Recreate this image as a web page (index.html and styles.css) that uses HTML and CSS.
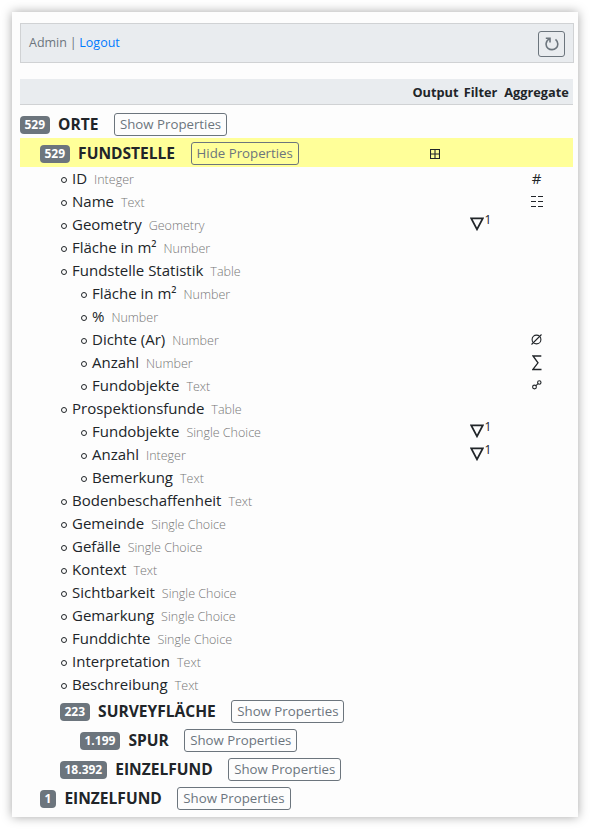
FILE: index.html
```html
<!DOCTYPE html>
<html lang="de">
<head>
<meta charset="utf-8">
<title>Properties</title>
<link rel="stylesheet" href="styles.css">
</head>
<body>
<svg class="defs" aria-hidden="true">
  <symbol id="filter" viewBox="0 0 14 14"><path d="M1.200 1.400H12.800L7 12.300Z" fill="none" stroke="currentColor" stroke-width="1.800"/></symbol>
</svg>
<main class="panel">
  <header class="toolbar">
    <div class="user">Admin | <a href="#">Logout</a></div>
    <button class="reload" aria-label="Reload"><svg width="14" height="14" viewBox="0 0 14 14"><path d="M.8 1.300H5V5.500M4.800 1.600C.2 4 .2 9 3 11.300C5.200 13.100 8.900 13.100 11 11.200C13.500 8.900 13.400 4.800 10.500 2.300" fill="none" stroke="currentColor" stroke-width="1.600"/></svg></button>
  </header>
  <div class="row head"><span></span><span class="cell">Output</span><span class="cell">Filter</span><span class="cell">Aggregate</span></div>
  <section class="tree">
    <div class="row group"><div class="label"><span class="badge">529</span><b>ORTE</b><button>Show Properties</button></div></div>
    <div class="row group active"><div class="label l1"><span class="badge">529</span><b>FUNDSTELLE</b><button>Hide Properties</button></div><span class="cell out"><svg width="10" height="10" viewBox="0 0 10 10"><path d="M.5 .5H9.500V9.500H.5ZM5 .5V9.500M.5 5H9.500" fill="none" stroke="currentColor" stroke-width="1.100"/></svg></span></div>
    <div class="row prop"><div class="label l2">ID<small>Integer</small></div><span class="cell agg">#</span></div>
    <div class="row prop"><div class="label l2">Name<small>Text</small></div><span class="cell agg"><svg width="12" height="12" viewBox="0 0 12 12"><path d="M0 1.500H5M7 1.500H12M0 6.500H5M7 6.500H12M0 11.500H5M7 11.500H12" stroke="currentColor"/></svg></span></div>
    <div class="row prop"><div class="label l2">Geometry<small>Geometry</small></div><span class="cell filter"><svg width="14" height="14"><use href="#filter"/></svg><sup>1</sup></span></div>
    <div class="row prop"><div class="label l2">Fläche in m²<small>Number</small></div></div>
    <div class="row prop"><div class="label l2">Fundstelle Statistik<small>Table</small></div></div>
    <div class="row prop"><div class="label l3">Fläche in m²<small>Number</small></div></div>
    <div class="row prop"><div class="label l3">%<small>Number</small></div></div>
    <div class="row prop"><div class="label l3">Dichte (Ar)<small>Number</small></div><span class="cell agg"><svg width="11" height="11" viewBox="0 0 11 11"><circle cx="5.500" cy="5.500" r="4.400" fill="none" stroke="currentColor" stroke-width="1.100"/><path d="M.5 10.500L10.500 .5" stroke="currentColor" stroke-width="1.100"/></svg></span></div>
    <div class="row prop"><div class="label l3">Anzahl<small>Number</small></div><span class="cell agg sum"><svg width="10" height="16" viewBox="0 0 10 16"><path d="M9.300 1H1L6 7.800L.8 14.500H9.500" fill="none" stroke="currentColor" stroke-width="1.300"/></svg></span></div>
    <div class="row prop"><div class="label l3">Fundobjekte<small>Text</small></div><span class="cell agg"><svg width="10" height="10" viewBox="0 0 10 10"><g fill="none" stroke="currentColor" stroke-width="1.100"><circle cx="2.500" cy="7" r="1.900"/><circle cx="7.300" cy="2.500" r="1.700"/><path d="M4 5.700L6 3.700"/></g></svg></span></div>
    <div class="row prop"><div class="label l2">Prospektionsfunde<small>Table</small></div></div>
    <div class="row prop"><div class="label l3">Fundobjekte<small>Single Choice</small></div><span class="cell filter"><svg width="14" height="14"><use href="#filter"/></svg><sup>1</sup></span></div>
    <div class="row prop"><div class="label l3">Anzahl<small>Integer</small></div><span class="cell filter"><svg width="14" height="14"><use href="#filter"/></svg><sup>1</sup></span></div>
    <div class="row prop"><div class="label l3">Bemerkung<small>Text</small></div></div>
    <div class="row prop"><div class="label l2">Bodenbeschaffenheit<small>Text</small></div></div>
    <div class="row prop"><div class="label l2">Gemeinde<small>Single Choice</small></div></div>
    <div class="row prop"><div class="label l2">Gefälle<small>Single Choice</small></div></div>
    <div class="row prop"><div class="label l2">Kontext<small>Text</small></div></div>
    <div class="row prop"><div class="label l2">Sichtbarkeit<small>Single Choice</small></div></div>
    <div class="row prop"><div class="label l2">Gemarkung<small>Single Choice</small></div></div>
    <div class="row prop"><div class="label l2">Funddichte<small>Single Choice</small></div></div>
    <div class="row prop"><div class="label l2">Interpretation<small>Text</small></div></div>
    <div class="row prop"><div class="label l2">Beschreibung<small>Text</small></div></div>
    <div class="row group"><div class="label l2"><span class="badge">223</span><b>SURVEYFLÄCHE</b><button>Show Properties</button></div></div>
    <div class="row group"><div class="label l3"><span class="badge">1.199</span><b>SPUR</b><button>Show Properties</button></div></div>
    <div class="row group"><div class="label l2"><span class="badge">18.392</span><b>EINZELFUND</b><button>Show Properties</button></div></div>
    <div class="row group"><div class="label l1"><span class="badge">1</span><b>EINZELFUND</b><button>Show Properties</button></div></div>
  </section>
</main>
</body>
</html>
```
FILE: styles.css
```css
* { box-sizing: border-box; }
body {
  margin: 0;
  padding: 12px;
  background: #fff;
  color: #212529;
  font: 15px/23px "Open Sans", "Noto Sans", sans-serif;
}
.defs { display: none; }
.panel {
  width: 566px;
  height: 805px;
  padding: 11px 4px 0 8px;
  background: #fdfdfd;
  box-shadow: 0 0 10px rgba(0, 0, 0, .35);
}
.toolbar {
  display: flex;
  justify-content: space-between;
  height: 40px;
  padding: 7px 8px;
  background: #e9ecef;
  border: 1px solid #d0d2d4;
  color: #6c757d;
  font-size: 12.5px;
}
.user { line-height: 23px; word-spacing: -.5px; }
.user a { color: #007bff; text-decoration: none; }
button {
  padding: 0 5px;
  background: transparent;
  border: 1px solid #6c757d;
  border-radius: 3px;
  color: #6c757d;
  font: 13.25px/21px "Open Sans", "Noto Sans", sans-serif;
  white-space: nowrap;
}
.reload {
  display: flex;
  align-items: center;
  justify-content: center;
  width: 27px;
  height: 26px;
  padding: 0;
}
.row {
  display: grid;
  grid-template-columns: 390px 51px 39px 73px;
  width: 553px;
}
.cell {
  display: flex;
  align-items: center;
  justify-content: center;
  white-space: nowrap;
}
.head {
  height: 26px;
  margin: 16px 0 4px;
  padding-top: 1px;
  background: #e9ecef;
  border-bottom: 1px solid #d0d2d4;
  font-size: 12.75px;
  font-weight: 700;
}
.group { height: 29px; }
.active { background: #ff9; }
.out { padding: 3px 1px 0 0; }
.label { display: flex; align-items: center; white-space: nowrap; }
.group .label { padding-top: 1px; }
.l1 { padding-left: 20px; }
.l2 { padding-left: 40px; }
.l3 { padding-left: 60px; }
.badge {
  height: 18px;
  padding: 0 4.5px;
  margin: 1px 8.5px 0 0;
  border-radius: 4px;
  background: #6c757d;
  color: #fff;
  font-size: 12px;
  font-weight: 700;
  line-height: 18px;
}
.group b { font-size: 15.55px; }
.group button { height: 23px; margin-left: 15.5px; }
.prop { height: 23px; grid-template-rows: 23px; line-height: 21px; }
.prop .label::before {
  content: "";
  box-sizing: border-box;
  width: 6px;
  height: 6px;
  margin: 2px 5px 0 1px;
  border: 1px solid #212529;
  border-radius: 50%;
}
small { margin: 2px 0 0 7px; color: #777; font-size: 12.5px; font-weight: 300; }
.agg { grid-column: 4; padding-bottom: 1px; }
.sum { padding: 1px 0 0; }
.filter { grid-column: 3; padding-bottom: 2px; }
.filter sup { margin: -7px 0 0 1px; font-size: 12px; line-height: 12px; }
```
